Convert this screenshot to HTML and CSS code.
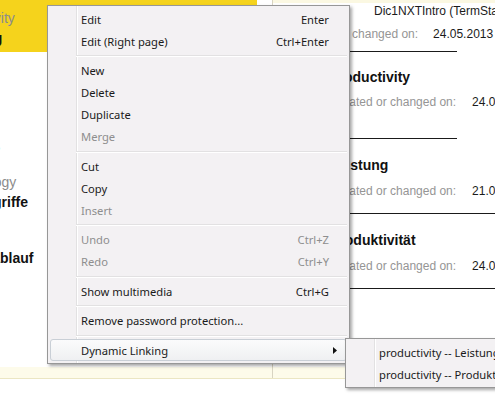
FILE: index.html
```html
<!DOCTYPE html>
<html lang="en">
<head>
    <meta charset="UTF-8">
    <title>TermStar - Dynamic Linking</title>
    <link rel="stylesheet" href="styles.css">
</head>
<body>

    <div class="app">
        <div class="list">
            <div class="item selected"><span class="src">productivity</span><span class="tgt">Leistung</span></div>
            <div class="item"><span class="src">yield</span><span class="tgt">Ertrag</span></div>
            <div class="item"><span class="src">output</span><span class="tgt">Ausstoß</span></div>
            <div class="item"><span class="src">terminology</span><span class="tgt">Fachbegriffe</span></div>
            <div class="item"><span class="src">workflow</span><span class="tgt">Arbeitsablauf</span></div>
            <div class="pane-foot"></div>
        </div>

        <div class="detail">
            <div class="dict-head">
                <div class="row"><span class="head-key">Dictionary:</span><span>Dic1NXTIntro (TermStar NXT)</span></div>
                <div class="row date-row"><span class="label">Created or changed on:</span><span>24.05.2013</span></div>
            </div>
            <div class="entry short tall">
                <div class="term">productivity</div>
                <div class="row"><span class="label">Created or changed on:</span><span class="date">24.05.2013</span></div>
            </div>
            <div class="entry">
                <div class="term">Leistung</div>
                <div class="row"><span class="label">Created or changed on:</span><span class="date">21.05.2013</span></div>
            </div>
            <div class="entry">
                <div class="term">Produktivität</div>
                <div class="row"><span class="label">Created or changed on:</span><span class="date">24.05.2013</span></div>
            </div>
            <div class="pane-foot"></div>
        </div>
    </div>

    <!-- context menu -->
    <div class="menu">
        <div class="menu-item"><span class="text">Edit</span><span class="key">Enter</span></div>
        <div class="menu-item"><span class="text">Edit (Right page)</span><span class="key">Ctrl+Enter</span></div>
        <div class="menu-sep"></div>
        <div class="menu-item"><span class="text">New</span></div>
        <div class="menu-item"><span class="text">Delete</span></div>
        <div class="menu-item"><span class="text">Duplicate</span></div>
        <div class="menu-item disabled"><span class="text">Merge</span></div>
        <div class="menu-sep"></div>
        <div class="menu-item"><span class="text">Cut</span></div>
        <div class="menu-item"><span class="text">Copy</span></div>
        <div class="menu-item disabled"><span class="text">Insert</span></div>
        <div class="menu-sep"></div>
        <div class="menu-item disabled"><span class="text">Undo</span><span class="key">Ctrl+Z</span></div>
        <div class="menu-item disabled"><span class="text">Redo</span><span class="key">Ctrl+Y</span></div>
        <div class="menu-sep"></div>
        <div class="menu-item"><span class="text">Show multimedia</span><span class="key">Ctrl+G</span></div>
        <div class="menu-sep"></div>
        <div class="menu-item"><span class="text">Remove password protection...</span></div>
        <div class="menu-sep"></div>
        <div class="menu-item hover">
            <span class="text">Dynamic Linking</span>
            <svg class="arrow" width="4" height="7" viewBox="0 0 4 7"><polygon points="0,0 4,3.5 0,7" fill="#111"/></svg>
        </div>
    </div>

    <div class="menu submenu">
        <div class="menu-item"><span class="text">productivity -- Leistung</span></div>
        <div class="menu-item"><span class="text">productivity -- Produktivität</span></div>
    </div>

</body>
</html>
```

FILE: styles.css
```css
body {
    margin: 0;
    width: 495px;
    height: 395px;
    overflow: hidden;
    position: relative;
    background: #fff;
    font-family: 'Liberation Sans', Arial, sans-serif;
    color: #1b1b1b;
}
.app {
    display: flex;
    height: 378px;
    border-bottom: 1px solid #ebe6c3;
}
/* left list of terms */
.list {
    flex: none;
    width: 272px;
    border-right: 1px solid #d8d4c2;
    display: flex;
    flex-direction: column;
    overflow: hidden;
}
.item {
    flex: none;
    margin-left: -56px;
    height: 56px;
    padding-top: 9px;
    box-sizing: border-box;
    display: flex;
    flex-direction: column;
    font-size: 14px;
}
.item.selected {
    height: 52px;
    margin-right: 15px;
    background: #f5d31c;
}
.item .src {
    line-height: 18px;
    color: #8c8c8c;
}
.item .tgt {
    line-height: 22px;
    font-weight: 700;
    color: #111;
}
.pane-foot {
    flex: none;
    margin-top: auto;
    height: 11px;
    background: #fdfbea;
}
/* right detail pane */
.detail {
    flex: 1;
    min-width: 0;
    overflow: hidden;
    display: flex;
    flex-direction: column;
    border-top: 3px solid #fbf8e2;
    font-size: 12px;
}
.row {
    display: flex;
    line-height: 16px;
    white-space: nowrap;
}
.dict-head {
    padding: 0 0 9px 19px;
    margin-right: 38px;
    border-bottom: 1px solid #1a1a1a;
}
.head-key {
    flex: none;
    width: 82px;
    color: #8a8a8a;
}
.date-row {
    margin-top: 7px;
}
.label {
    color: #959595;
    margin-right: 15px;
}
.entry {
    padding: 18px 0 14px 57px;
    border-bottom: 1px solid #1a1a1a;
}
.entry.short {
    margin-right: 38px;
}
.entry.tall {
    padding-top: 17px;
    padding-bottom: 28px;
}
.entry .term {
    font-size: 14px;
    font-weight: 700;
    line-height: 16px;
    color: #111;
}
.entry .row {
    margin-top: 10px;
}
.entry.tall .row {
    margin-top: 9px;
}
.entry .label {
    margin-right: 16px;
}
/* context menu */
.menu {
    position: absolute;
    left: 47px;
    top: 5px;
    width: 303px;
    box-sizing: border-box;
    padding: 2px;
    border: 1px solid #979797;
    background:
        linear-gradient(to right, transparent 28px, #e2e1e2 28px, #e2e1e2 29px, #fff 29px, #fff 30px, transparent 30px),
        #f3f1f3;
    box-shadow: 2px 2px 3px rgba(0, 0, 0, 0.35);
    font-family: 'Noto Sans', 'Open Sans', sans-serif;
    font-size: 11.2px;
    color: #1a1a1a;
}
.menu-item {
    display: flex;
    align-items: center;
    height: 22px;
    padding: 0 17px 0 30px;
    border: 1px solid transparent;
    border-radius: 3px;
    box-sizing: border-box;
    white-space: nowrap;
}
.menu-item .text {
    flex: 1;
}
.menu-item.disabled {
    color: #8e8e8e;
}
.menu-item.hover {
    border-color: #c9cfd6;
    background: linear-gradient(#fbfbfc, #eff0f2);
}
.menu-item .arrow {
    margin-right: -8px;
}
.menu-sep {
    height: 1px;
    margin: 3px 0 2.5px 26px;
    background: #e2e1e2;
    border-bottom: 1px solid #fff;
}
.submenu {
    left: 345px;
    top: 338px;
    width: 175px;
}
```
